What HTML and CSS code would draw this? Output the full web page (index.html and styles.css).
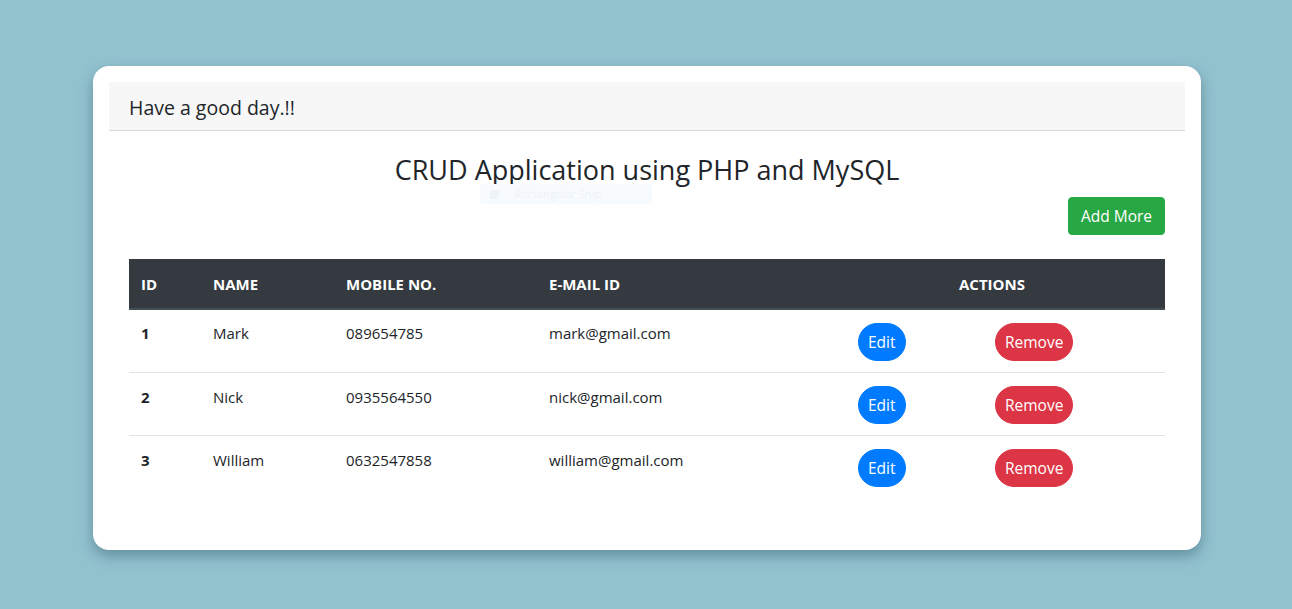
FILE: index.html
```html
<!DOCTYPE html>
<html lang="en">
<head>
<meta charset="utf-8">
<title>CRUD Application</title>
<link rel="stylesheet" href="styles.css">
</head>
<body>
<div class="page">
  <div class="card">
    <div class="card-header">Have a good day.!!</div>
    <div class="card-body">
      <h3 class="title">CRUD Application using PHP and MySQL</h3>
      <div class="snip"><span class="snip-icon"></span><span>Rectangular Snip</span></div>
      <div class="toolbar"><button class="btn btn-success">Add More</button></div>
      <table class="table">
        <colgroup>
          <col class="c-id"><col class="c-name"><col class="c-mobile"><col class="c-email"><col class="c-edit"><col class="c-remove">
        </colgroup>
        <thead>
          <tr>
            <th>ID</th><th>NAME</th><th>MOBILE NO.</th><th>E-MAIL ID</th><th colspan="2" class="th-actions">ACTIONS</th>
          </tr>
        </thead>
        <tbody>
          <tr>
            <td class="id">1</td><td>Mark</td><td>089654785</td><td>mark@gmail.com</td>
            <td><button class="btn pill btn-primary">Edit</button></td>
            <td><button class="btn pill btn-danger">Remove</button></td>
          </tr>
          <tr>
            <td class="id">2</td><td>Nick</td><td>0935564550</td><td>nick@gmail.com</td>
            <td><button class="btn pill btn-primary">Edit</button></td>
            <td><button class="btn pill btn-danger">Remove</button></td>
          </tr>
          <tr>
            <td class="id">3</td><td>William</td><td>0632547858</td><td>william@gmail.com</td>
            <td><button class="btn pill btn-primary">Edit</button></td>
            <td><button class="btn pill btn-danger">Remove</button></td>
          </tr>
        </tbody>
      </table>
    </div>
  </div>
</div>
</body>
</html>
```

FILE: styles.css
```css
* { box-sizing: border-box; }
html, body { margin: 0; padding: 0; }
body {
  background: #93c2cf;
  font-family: "Open Sans", "Noto Sans", "Liberation Sans", sans-serif;
  color: #212529;
  font-size: 15px;
  line-height: 24px;
}
.page {
  padding: 66px 91px 59px 93px;
}
.card {
  background: #fff;
  border-radius: 16px;
  padding: 16px;
  height: 484px;
  box-shadow: 0 6px 14px rgba(40, 80, 95, 0.45);
}
.card-header {
  background: #f7f7f7;
  border-bottom: 1px solid #d9d9d9;
  height: 49px;
  padding: 1px 20px 0;
  font-size: 19.5px;
  line-height: 50px;
}
.card-body {
  padding: 21px 20px 0;
  position: relative;
}
.title {
  margin: 0;
  text-align: center;
  font-weight: 400;
  font-size: 27px;
  line-height: 35px;
}
.snip {
  position: absolute;
  left: 371px;
  top: 53px;
  width: 172px;
  height: 20px;
  background: #f7fbfe;
  border-radius: 2px;
  font-size: 11px;
  line-height: 20px;
  color: #eef2f6;
  display: flex;
  align-items: center;
  gap: 16px;
  padding-left: 10px;
}
.snip-icon {
  width: 9px;
  height: 9px;
  background: #edf3f8;
}
.toolbar {
  display: flex;
  justify-content: flex-end;
  margin-top: 10px;
  margin-bottom: 24px;
}
.btn {
  font-family: inherit;
  border: 1px solid transparent;
  color: #fff;
  font-size: 15.5px;
  line-height: 24px;
  padding: 6px 12px;
  border-radius: 4px;
  cursor: pointer;
}
.btn-success { background: #28a745; border-color: #28a745; }
.btn-primary { background: #007bff; border-color: #007bff; }
.btn-danger { background: #dc3545; border-color: #dc3545; }
.pill { border-radius: 20px; height: 38px; padding: 6px 9px; }
.table {
  width: 100%;
  border-collapse: collapse;
  table-layout: fixed;
}
.c-id { width: 72px; }
.c-name { width: 133px; }
.c-mobile { width: 203px; }
.c-email { width: 309px; }
.c-edit { width: 137px; }
.c-remove { width: 182px; }
.table th {
  background: #343a40;
  color: #fff;
  font-weight: 700;
  text-align: left;
  padding: 12px;
  height: 50px;
  border-bottom: 2px solid #454d55;
  font-size: 15px;
}
.table th.th-actions {
  text-align: center;
  padding-right: 39px;
}
.table td {
  vertical-align: top;
  padding: 12px 12px 11px;
  border-top: 1px solid #dee2e6;
  height: 62px;
}
.table tbody tr:first-child td { border-top: none; height: 61px; padding-top: 11px; }
.table td.id { font-weight: 700; }
.table td .btn { margin-top: 1px; }
.table tbody tr:first-child td .btn { margin-top: 2px; }
```
